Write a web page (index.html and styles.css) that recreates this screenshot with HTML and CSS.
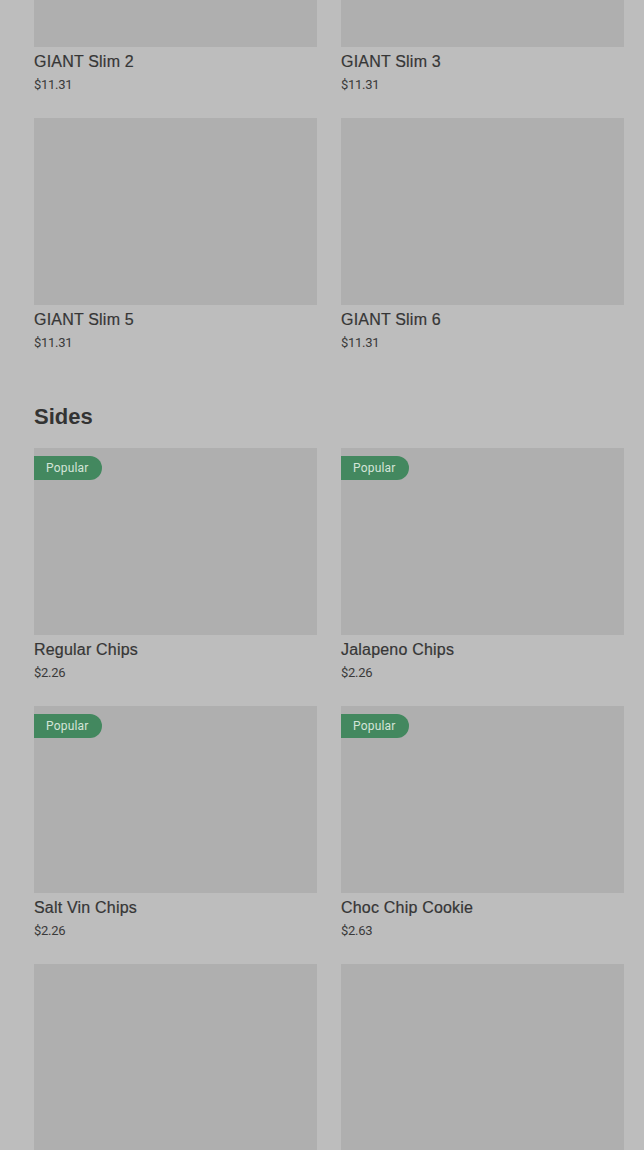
FILE: index.html
```html
<!DOCTYPE html>
<html>
<head>
<meta charset="utf-8">
<link rel="stylesheet" href="styles.css">
</head>
<body>
<main class="page">
  <section class="section first">
    <div class="grid">
      <div class="card"><div class="thumb"></div><div class="name">GIANT Slim 2</div><div class="price">$11.31</div></div>
      <div class="card"><div class="thumb"></div><div class="name">GIANT Slim 3</div><div class="price">$11.31</div></div>
      <div class="card"><div class="thumb"></div><div class="name">GIANT Slim 5</div><div class="price">$11.31</div></div>
      <div class="card"><div class="thumb"></div><div class="name">GIANT Slim 6</div><div class="price">$11.31</div></div>
    </div>
  </section>
  <section class="section">
    <h2 class="heading">Sides</h2>
    <div class="grid">
      <div class="card"><div class="thumb"><span class="badge">Popular</span></div><div class="name">Regular Chips</div><div class="price">$2.26</div></div>
      <div class="card"><div class="thumb"><span class="badge">Popular</span></div><div class="name">Jalapeno Chips</div><div class="price">$2.26</div></div>
      <div class="card"><div class="thumb"><span class="badge">Popular</span></div><div class="name">Salt Vin Chips</div><div class="price">$2.26</div></div>
      <div class="card"><div class="thumb"><span class="badge">Popular</span></div><div class="name">Choc Chip Cookie</div><div class="price">$2.63</div></div>
      <div class="card"><div class="thumb"></div><div class="name">&nbsp;</div><div class="price">&nbsp;</div></div>
      <div class="card"><div class="thumb"></div><div class="name">&nbsp;</div><div class="price">&nbsp;</div></div>
    </div>
  </section>
</main>
</body>
</html>
```

FILE: styles.css
```css
html, body {
  margin: 0;
  padding: 0;
  background: #bdbdbd;
  overflow: hidden;
}
body {
  font-family: "Liberation Sans", Arial, sans-serif;
  color: #3a3a3a;
}
.page {
  padding: 0 20px 0 34px;
  margin-top: -140px;
}
.section {
  display: flex;
  flex-direction: column;
}
.section.first {
  margin-bottom: 51px;
}
.heading {
  margin: 0 0 17px;
  font-size: 22px;
  line-height: 28px;
  font-weight: 700;
  color: #333;
}
.grid {
  display: grid;
  grid-template-columns: 283px 283px;
  column-gap: 24px;
  row-gap: 24px;
}
.card {
  display: flex;
  flex-direction: column;
}
.thumb {
  position: relative;
  height: 187px;
  background: #afafaf;
}
.badge {
  position: absolute;
  left: 0;
  top: 8px;
  height: 24px;
  line-height: 24px;
  padding: 0 13px 0 12px;
  background: #43885f;
  color: #d3e4d8;
  font-family: Roboto, "Liberation Sans", sans-serif;
  font-size: 12px;
  letter-spacing: 0.2px;
  border-radius: 0 12px 12px 0;
}
.name {
  margin-top: 5px;
  font-size: 16px;
  line-height: 20px;
  font-weight: 400;
  letter-spacing: 0.2px;
  color: #363636;
  -webkit-text-stroke: 0.2px #363636;
}
.price {
  margin-top: 4px;
  font-family: Roboto, "Liberation Sans", sans-serif;
  font-size: 13px;
  line-height: 18px;
  color: #3a3a3a;
  letter-spacing: -0.3px;
}
```
